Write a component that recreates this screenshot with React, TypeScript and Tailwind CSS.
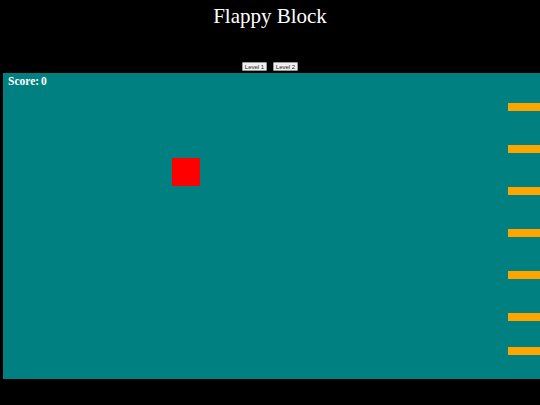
import React from 'react';

const pipes = [30, 72, 114, 156, 198, 240, 274];

const App: React.FC = () => {
  return (
    <div className="w-[540px] h-[405px] bg-black overflow-hidden" style={{ fontFamily: '"Liberation Serif", serif' }}>
      <h1 className="text-center text-white text-[21px] leading-none pt-[6px] h-[62px]">Flappy Block</h1>
      <div className="flex justify-center gap-[6px] h-[11px]" style={{ fontFamily: '"Liberation Sans", sans-serif' }}>
        <button className="h-[9px] w-[25px] px-0 text-[6px] leading-none text-[#222] bg-[#efefef] border border-[#999] rounded-[1px]">Level 1</button>
        <button className="h-[9px] w-[25px] px-0 text-[6px] leading-none text-[#222] bg-[#efefef] border border-[#999] rounded-[1px]">Level 2</button>
      </div>
      <div className="relative ml-[3px] w-[560px] h-[306px] bg-[#008080]">
        <div className="absolute left-[5px] top-[0px] flex text-white font-bold text-[11.5px]">
          <span>Score:</span>
          <span className="ml-[2px]">0</span>
        </div>
        <div className="absolute left-[169px] top-[85px] w-[28px] h-[28px] bg-[#ff0000]" />
        {pipes.map((t) => (
          <div key={t} className="absolute left-[505px] w-[60px] h-[8px] bg-[#ffa500]" style={{ top: t }} />
        ))}
      </div>
    </div>
  );
};

export default App;
